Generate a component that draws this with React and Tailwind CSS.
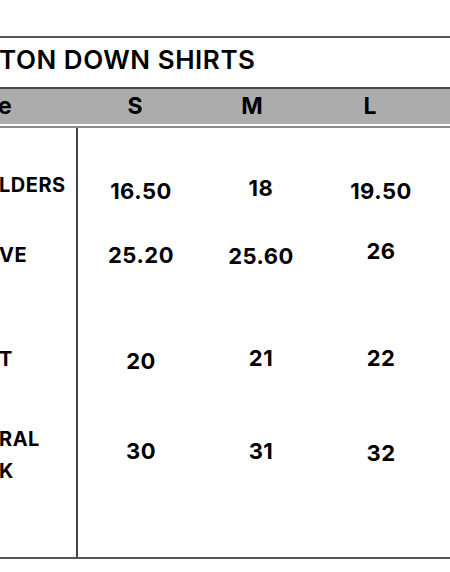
import React from 'react';

// Таблиця розмірів (обрізаний фрагмент)
const sizes = [
    { s: 'S', w: 'w-[118px]' },
    { s: 'M', w: 'w-[116px]' },
    { s: 'L', w: 'w-[120px]' },
];

// Кожен ряд: висота, відступ підпису і відступи значень (вони трохи "гуляють" як в оригіналі)
const rows = [
    { label: ['LDERS'], lp: 'pt-[47px]', h: 'h-[92px]', values: [['16.50', 'pt-[52px]'], ['18', 'pt-[49px]'], ['19.50', 'pt-[52px]']] },
    { label: ['VE'], lp: 'pt-[25px]', h: 'h-[80px]', values: [['25.20', 'pt-[24px]'], ['25.60', 'pt-[25px]'], ['26', 'pt-[20px]']] },
    { label: ['T'], lp: 'pt-[49px]', h: 'h-[120px]', values: [['20', 'pt-[50px]'], ['21', 'pt-[47px]'], ['22', 'pt-[47px]']] },
    { label: ['RAL', 'K'], lp: 'pt-[9px]', h: 'h-[137px]', values: [['30', 'pt-[20px]'], ['31', 'pt-[20px]'], ['32', 'pt-[22px]']] },
];

export default function App() {
    return (
        <div className="w-[450px] h-[572px] bg-white overflow-hidden text-black font-['Inter',sans-serif]">
            <div className="h-[36px]" />
            {/* Заголовок */}
            <div className="border-t-2 border-[#555] h-[51px] pt-[9px]">
                <h1 className="text-[26px] font-semibold leading-none tracking-[0.55px] -ml-[1px]">TON DOWN SHIRTS</h1>
            </div>
            {/* Сіра смуга з розмірами */}
            <div className="border-t-2 border-[#4a4a4a] bg-[#acacac] h-[37px] flex items-center">
                <div className="w-[78px] text-[23px] font-bold leading-none -ml-[2px]">e</div>
                {sizes.map((s) => (
                    <div key={s.s} className={`${s.w} text-center text-[23px] font-bold leading-none`}>{s.s}</div>
                ))}
            </div>
            <div className="h-[2px] bg-white" />
            <div className="h-[2px] bg-[#8a8a8a]" />
            {/* Тіло таблиці */}
            <div className="flex border-b-2 border-[#555] h-[431px]">
                <div className="w-[78px] border-r-2 border-[#444]">
                    {rows.map((r, i) => (
                        <div key={i} className={`${r.h} ${r.lp} flex flex-col text-[20px] font-bold leading-[32px] tracking-[0.5px] -ml-[1px]`}>
                            {r.label.map((l) => <span key={l} className="-mt-[6px] mb-[6px]">{l}</span>)}
                        </div>
                    ))}
                </div>
                <div className="flex-1 pl-[3px]">
                    {rows.map((r, i) => (
                        <div key={i} className={`${r.h} flex items-start`}>
                            {r.values.map(([v, pt], j) => (
                                <div key={j} className={`w-[120px] text-center text-[22px] font-bold leading-none tracking-[0.5px] ${pt}`}>{v}</div>
                            ))}
                        </div>
                    ))}
                </div>
            </div>
        </div>
    );
}
